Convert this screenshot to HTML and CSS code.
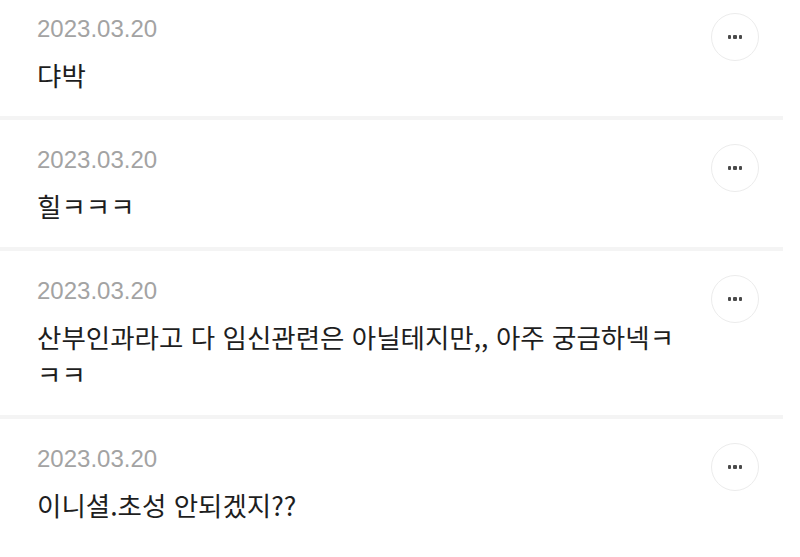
FILE: index.html
```html
<!DOCTYPE html>
<html lang="ko">
<head>
  <meta charset="UTF-8" />
  <meta name="viewport" content="width=device-width, initial-scale=1.0"/>
  <title>댓글</title>
  <link rel="stylesheet" href="styles.css">
</head>
<body>
  <ul class="comments">
    <li class="comment">
      <div class="comment-body">
        <div class="date">2023.03.20</div>
        <p class="text">댜박</p>
      </div>
      <button class="more" aria-label="더보기"><span></span><span></span><span></span></button>
    </li>
    <li class="comment">
      <div class="comment-body">
        <div class="date">2023.03.20</div>
        <p class="text">힐ㅋㅋㅋ</p>
      </div>
      <button class="more" aria-label="더보기"><span></span><span></span><span></span></button>
    </li>
    <li class="comment">
      <div class="comment-body">
        <div class="date">2023.03.20</div>
        <p class="text">산부인과라고 다 임신관련은 아닐테지만,, 아주 궁금하넥ㅋㅋㅋ</p>
      </div>
      <button class="more" aria-label="더보기"><span></span><span></span><span></span></button>
    </li>
    <li class="comment">
      <div class="comment-body">
        <div class="date">2023.03.20</div>
        <p class="text">이니셜.초성 안되겠지??</p>
      </div>
      <button class="more" aria-label="더보기"><span></span><span></span><span></span></button>
    </li>
  </ul>
</body>
</html>
```

FILE: styles.css
```css
body {
  margin: 0;
  background: #fff;
  font-family: "Liberation Sans", "Noto Sans CJK KR", sans-serif;
  color: #222;
  overflow: hidden;
}

.comments {
  list-style: none;
  margin: -11px 0 0;
  padding: 0;
  width: 783px;
}

.comment {
  display: flex;
  align-items: flex-start;
  justify-content: space-between;
  padding: 25px 24px 23px 37px;
  border-bottom: 4px solid #f4f4f4;
}

.comment:last-child {
  border-bottom: none;
}

.comment-body {
  width: 655px;
}

.date {
  font-size: 24px;
  line-height: 29px;
  color: #a3a3a3;
}

.text {
  margin: 13px 0 0;
  font-family: "Noto Sans CJK KR", sans-serif;
  font-size: 26.5px;
  line-height: 37px;
  color: #1e1e1e;
}

/* round "..." menu button on the right of each comment */
.more {
  flex: none;
  width: 48px;
  height: 48px;
  margin-top: -1px;
  border: 1px solid #ececec;
  border-radius: 50%;
  background: #fff;
  display: flex;
  align-items: center;
  justify-content: center;
  gap: 2px;
  padding: 0;
  cursor: pointer;
}

.more span {
  width: 3.5px;
  height: 3.5px;
  border-radius: 1px;
  background: #4a4a4a;
}
```
